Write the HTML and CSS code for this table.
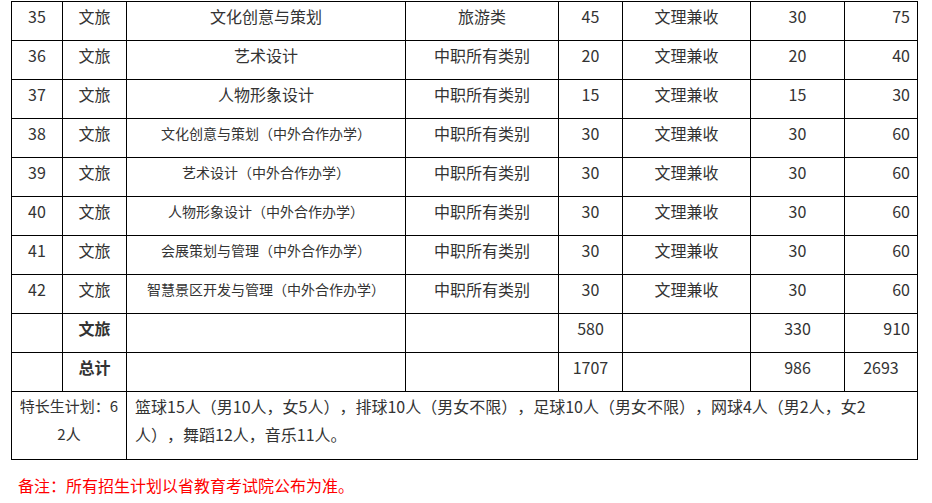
FILE: index.html
```html
<!DOCTYPE html>
<html lang="zh-CN">
<head>
<meta charset="utf-8">
<title>招生计划</title>
<link rel="stylesheet" href="styles.css">
</head>
<body>
<div class="page">
  <table class="plan">
    <colgroup>
      <col class="c-no"><col class="c-dept"><col class="c-major"><col class="c-type">
      <col class="c-num"><col class="c-sub"><col class="c-plan"><col class="c-total">
    </colgroup>
    <tbody>
      <tr><td>35</td><td>文旅</td><td>文化创意与策划</td><td>旅游类</td><td>45</td><td>文理兼收</td><td>30</td><td class="r">75</td></tr>
      <tr><td>36</td><td>文旅</td><td>艺术设计</td><td>中职所有类别</td><td>20</td><td>文理兼收</td><td>20</td><td class="r">40</td></tr>
      <tr><td>37</td><td>文旅</td><td>人物形象设计</td><td>中职所有类别</td><td>15</td><td>文理兼收</td><td>15</td><td class="r">30</td></tr>
      <tr><td>38</td><td>文旅</td><td class="small">文化创意与策划（中外合作办学）</td><td>中职所有类别</td><td>30</td><td>文理兼收</td><td>30</td><td class="r">60</td></tr>
      <tr><td>39</td><td>文旅</td><td class="small">艺术设计（中外合作办学）</td><td>中职所有类别</td><td>30</td><td>文理兼收</td><td>30</td><td class="r">60</td></tr>
      <tr><td>40</td><td>文旅</td><td class="small">人物形象设计（中外合作办学）</td><td>中职所有类别</td><td>30</td><td>文理兼收</td><td>30</td><td class="r">60</td></tr>
      <tr><td>41</td><td>文旅</td><td class="small">会展策划与管理（中外合作办学）</td><td>中职所有类别</td><td>30</td><td>文理兼收</td><td>30</td><td class="r">60</td></tr>
      <tr><td>42</td><td>文旅</td><td class="small">智慧景区开发与管理（中外合作办学）</td><td>中职所有类别</td><td>30</td><td>文理兼收</td><td>30</td><td class="r">60</td></tr>
      <tr><td></td><td class="b">文旅</td><td></td><td></td><td>580</td><td></td><td>330</td><td class="r">910</td></tr>
      <tr><td></td><td class="b">总计</td><td></td><td></td><td>1707</td><td></td><td>986</td><td>2693</td></tr>
      <tr class="special"><td colspan="2" class="label">特长生计划：62人</td><td colspan="6" class="text">篮球15人（男10人，女5人），排球10人（男女不限），足球10人（男女不限），网球4人（男2人，女2人），舞蹈12人，音乐11人。</td></tr>
    </tbody>
  </table>
  <p class="note">备注：所有招生计划以省教育考试院公布为准。</p>
</div>
</body>
</html>
```
FILE: styles.css
```css
html, body {
  margin: 0;
  padding: 0;
  background: #fff;
}

body {
  font-family: "Noto Sans CJK SC", "Microsoft YaHei", sans-serif;
  font-size: 16px;
  color: #333;
  text-spacing-trim: space-all;
}

.page {
  padding: 1px 0 0 11px;
}

.plan {
  border-collapse: collapse;
  table-layout: fixed;
  width: 907px;
}

.c-no { width: 51px; }
.c-dept { width: 64px; }
.c-major { width: 279px; }
.c-type { width: 153px; }
.c-num { width: 64px; }
.c-sub { width: 128px; }
.c-plan { width: 94px; }
.c-total { width: 73px; }

.plan tr {
  height: 39px;
}

.plan td {
  border: 1px solid #000;
  padding: 0 7px;
  line-height: 28px;
  text-align: center;
  vertical-align: top;
  white-space: nowrap;
}

.plan td.r {
  text-align: right;
}

.plan td.small {
  font-size: 14px;
}

.plan td.b {
  font-weight: bold;
}

.plan .special {
  height: 68px;
}

.plan .special td {
  white-space: normal;
}

.plan td.label {
  font-size: 15px;
  word-break: break-all;
}

.plan td.text {
  text-align: left;
  padding-left: 8px;
}

.note {
  margin: 11px 0 0 7px;
  line-height: 28px;
  color: #f00;
}
```
